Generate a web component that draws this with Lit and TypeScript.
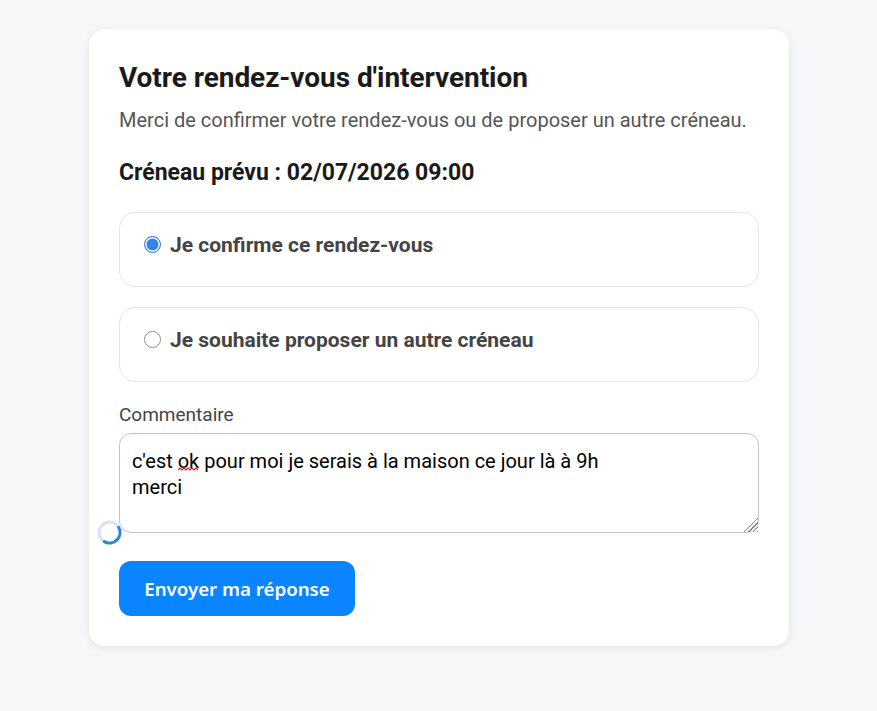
import { LitElement, html, css } from "lit";
import { customElement } from "lit/decorators.js";

@customElement("app-root")
export class AppRoot extends LitElement {
  static styles = css`
    :host { display: block; min-height: 711px; background: #f6f7f9; font-family: Roboto, sans-serif; box-sizing: border-box; padding: 29px 88px 0 89px; }
    * { box-sizing: border-box; }
    .card { background: #fff; border-radius: 16px; padding: 30px; height: 617px; box-shadow: 0 2px 8px rgba(0,0,0,.08); position: relative; }
    h1 { margin: 0; font-size: 28px; line-height: 38px; font-weight: 700; color: #1a1a1a; letter-spacing: -0.05px; }
    .sub { margin: 9px 0 0; font-size: 20px; line-height: 28px; color: #555; }
    .slot { margin: 24px 0 0; font-size: 23px; line-height: 30px; font-weight: 700; color: #1a1a1a; }
    .opt { display: flex; align-items: flex-start; gap: 9px; height: 75px; margin-top: 20px; padding: 19px 24px; border: 1px solid #e4e6ea; border-radius: 16px; font-size: 21px; font-weight: 700; color: #444; line-height: 26px; }
    .first { margin-top: 24px; }
    .radio { appearance: none; width: 17px; height: 17px; margin: 4px 0 0; border: 1px solid #8f8f8f; border-radius: 50%; background: #fff; }
    .radio:checked { border-color: #3584e4; background: #3584e4; box-shadow: inset 0 0 0 1.5px #fff; }
    label.c { display: block; margin-top: 21px; font-size: 19px; line-height: 24px; color: #444; }
    .wrap { position: relative; margin-top: 6px; }
    textarea { display: block; width: 100%; height: 100px; padding: 14px 12px; border: 1px solid #c4c4c4; border-radius: 12px; font: 20px/26px Roboto, sans-serif; color: #000; resize: vertical; outline: none; }
    textarea::-webkit-resizer { background: linear-gradient(135deg, #fff 50%, transparent 50%), repeating-linear-gradient(135deg, transparent 0 2px, #888 2px 3px); }
    .squiggle { position: absolute; left: 59px; top: 34px; width: 21px; height: 4px; }
    button { display: block; margin-top: 28px; width: 236px; height: 55px; border: 0; border-radius: 12px; background: #0a84ff; color: #fff; font: 600 18.7px "Noto Sans", sans-serif; }
    .spin { position: absolute; left: 8px; top: 491px; width: 25px; height: 25px; }
  `;
  render() {
    return html`<div class="card">
      <h1>Votre rendez-vous d'intervention</h1>
      <p class="sub">Merci de confirmer votre rendez-vous ou de proposer un autre créneau.</p>
      <p class="slot">Créneau prévu : 02/07/2026 09:00</p>
      <label class="opt first"><input class="radio" type="radio" name="r" checked />Je confirme ce rendez-vous</label>
      <label class="opt"><input class="radio" type="radio" name="r" />Je souhaite proposer un autre créneau</label>
      <label class="c">Commentaire</label>
      <div class="wrap">
        <textarea spellcheck="false">c'est ok pour moi je serais à la maison ce jour là à 9h
merci</textarea>
        <svg class="squiggle" viewBox="0 0 21 4"><path d="M0 3 L2 1 L4 3 L6 1 L8 3 L10 1 L12 3 L14 1 L16 3 L18 1 L20 3" fill="none" stroke="#d02020" stroke-width="1.2"/></svg>
      </div>
      <button>Envoyer ma réponse</button>
      <svg class="spin" viewBox="0 0 25 25"><circle cx="12.5" cy="12.5" r="10.5" fill="none" stroke="#d3e5f6" stroke-width="3"/><path d="M21.6 7.25A10.5 10.5 0 0 1 7.25 21.6" fill="none" stroke="#2f86d8" stroke-width="3" stroke-linecap="round"/></svg>
    </div>`;
  }
}
